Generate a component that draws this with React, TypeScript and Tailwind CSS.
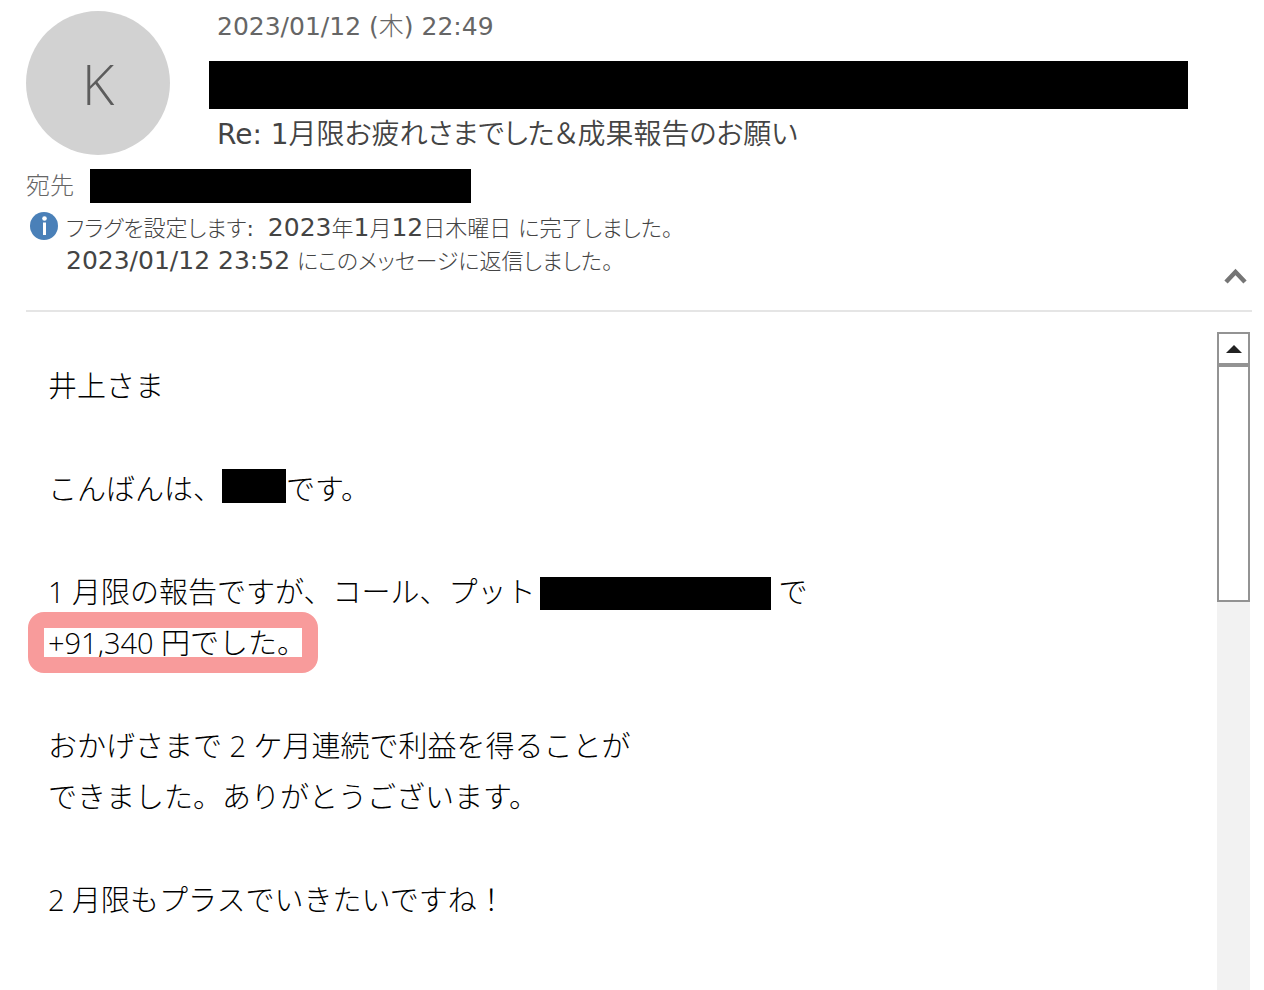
import type { ReactNode } from 'react';

interface RedactionProps {
  className: string;
}

function Redaction({ className }: RedactionProps) {
  return <span aria-hidden="true" className={`bg-black ${className}`} />;
}

// Latin runs are set heavier than the Japanese text around them
function Latin({ children }: { children: ReactNode }) {
  return <span className="font-normal">{children}</span>;
}

function StatusDate({ children }: { children: ReactNode }) {
  return <span className="font-normal text-[25px]">{children}</span>;
}

function InfoIcon() {
  return (
    <svg className="w-7 h-7 flex-shrink-0" viewBox="0 0 28 28" aria-hidden="true">
      <circle cx="14" cy="14" r="14" fill="#4a80b8" />
      <circle cx="14.5" cy="6.5" r="2.3" fill="#fff" />
      <path d="M13 10.5h3V23h-3z" fill="#fff" />
    </svg>
  );
}

function MessageHeader() {
  return (
    <header className="ml-[26px] mr-3 pt-[11px] pb-8 border-b-2 border-[#e5e5e5] font-['DejaVu_Sans','Noto_Sans_CJK_JP',sans-serif] text-[#444] [font-feature-settings:'palt']">
      <div className="flex">
        <div className="w-36 h-36 flex-shrink-0 rounded-full bg-[#d2d2d2] flex items-center justify-center font-['Open_Sans',sans-serif] font-light text-[56px] text-[#5c5c5c]">
          K
        </div>
        <div className="flex-1 min-w-0 ml-[39px] mr-16">
          <time dateTime="2023-01-12T22:49" className="block pl-2 text-[25px] leading-8 text-[#666] font-light">
            <Latin>2023/01/12 (</Latin>木<Latin>) 22:49</Latin>
          </time>
          <Redaction className="block h-12 mt-[18px]" />
          <h1 className="pl-2 mt-2 text-[28px] leading-9 font-[350]">
            <Latin>Re: 1</Latin>月限お疲れさまでした＆成果報告のお願い
          </h1>
        </div>
      </div>

      <div className="flex items-center mt-[14px]">
        <span className="w-16 text-2xl text-[#666] font-light leading-8">宛先</span>
        <Redaction className="block w-[381px] h-[34px]" />
      </div>

      <div className="flex mt-[9px] pl-1">
        <InfoIcon />
        <div className="flex-1 ml-2 text-[22px] leading-8 font-light">
          <p>
            フラグを設定します<Latin>:</Latin>&nbsp; <StatusDate>2023</StatusDate>年<StatusDate>1</StatusDate>月
            <StatusDate>12</StatusDate>日木曜日 に完了しました。
          </p>
          <p>
            <StatusDate>2023/01/12 23:52</StatusDate> にこのメッセージに返信しました。
          </p>
        </div>
        <button type="button" aria-label="ヘッダーを折りたたむ" className="self-end mr-[5px] -mb-1.5">
          <svg className="w-[23px] h-4" viewBox="0 0 23 16" fill="none" stroke="#757575" strokeWidth="4.5">
            <path d="M2 14l9.5-10L21 14" />
          </svg>
        </button>
      </div>
    </header>
  );
}

function MessageBody() {
  return (
    <article className="flex-1 min-w-0 pl-12 pt-7 flex flex-col gap-[52px] font-['Open_Sans','Noto_Sans_CJK_JP',sans-serif] font-light text-[29px] leading-[51px] text-black">
      <p>井上さま</p>
      <p>
        こんばんは、
        <Redaction className="inline-block w-16 h-[34px] align-[-3px]" />
        です。
      </p>
      <p>
        1 月限の報告ですが、コール、プット
        <Redaction className="inline-block w-[231px] h-[33px] ml-1 mr-2 align-[-7px]" />
        で
        <br />
        <mark className="relative bg-transparent text-black">
          +91,340 円でした。
          <span className="absolute -left-5 -right-3 -top-[11px] -bottom-[11px] border-16 border-[#f89b9b] rounded-2xl" />
        </mark>
      </p>
      <p>
        おかげさまで 2 ケ月連続で利益を得ることが
        <br />
        できました。ありがとうございます。
      </p>
      <p>2 月限もプラスでいきたいですね！</p>
    </article>
  );
}

function ScrollBar() {
  return (
    <div className="w-[33px] mr-[14px] flex flex-col bg-[#f2f2f2]">
      <button
        type="button"
        aria-label="上へスクロール"
        className="h-[33px] border-2 border-[#939393] bg-white flex items-center justify-center"
      >
        <svg className="w-4 h-2" viewBox="0 0 16 8" fill="#222">
          <path d="M0 8L8 0l8 8z" />
        </svg>
      </button>
      <div className="h-[237px] border-2 border-[#939393] bg-white" />
    </div>
  );
}

export default function App() {
  return (
    <div className="min-h-screen flex flex-col bg-white" lang="ja">
      <MessageHeader />
      <main className="flex-1 flex pt-5">
        <MessageBody />
        <ScrollBar />
      </main>
    </div>
  );
}
